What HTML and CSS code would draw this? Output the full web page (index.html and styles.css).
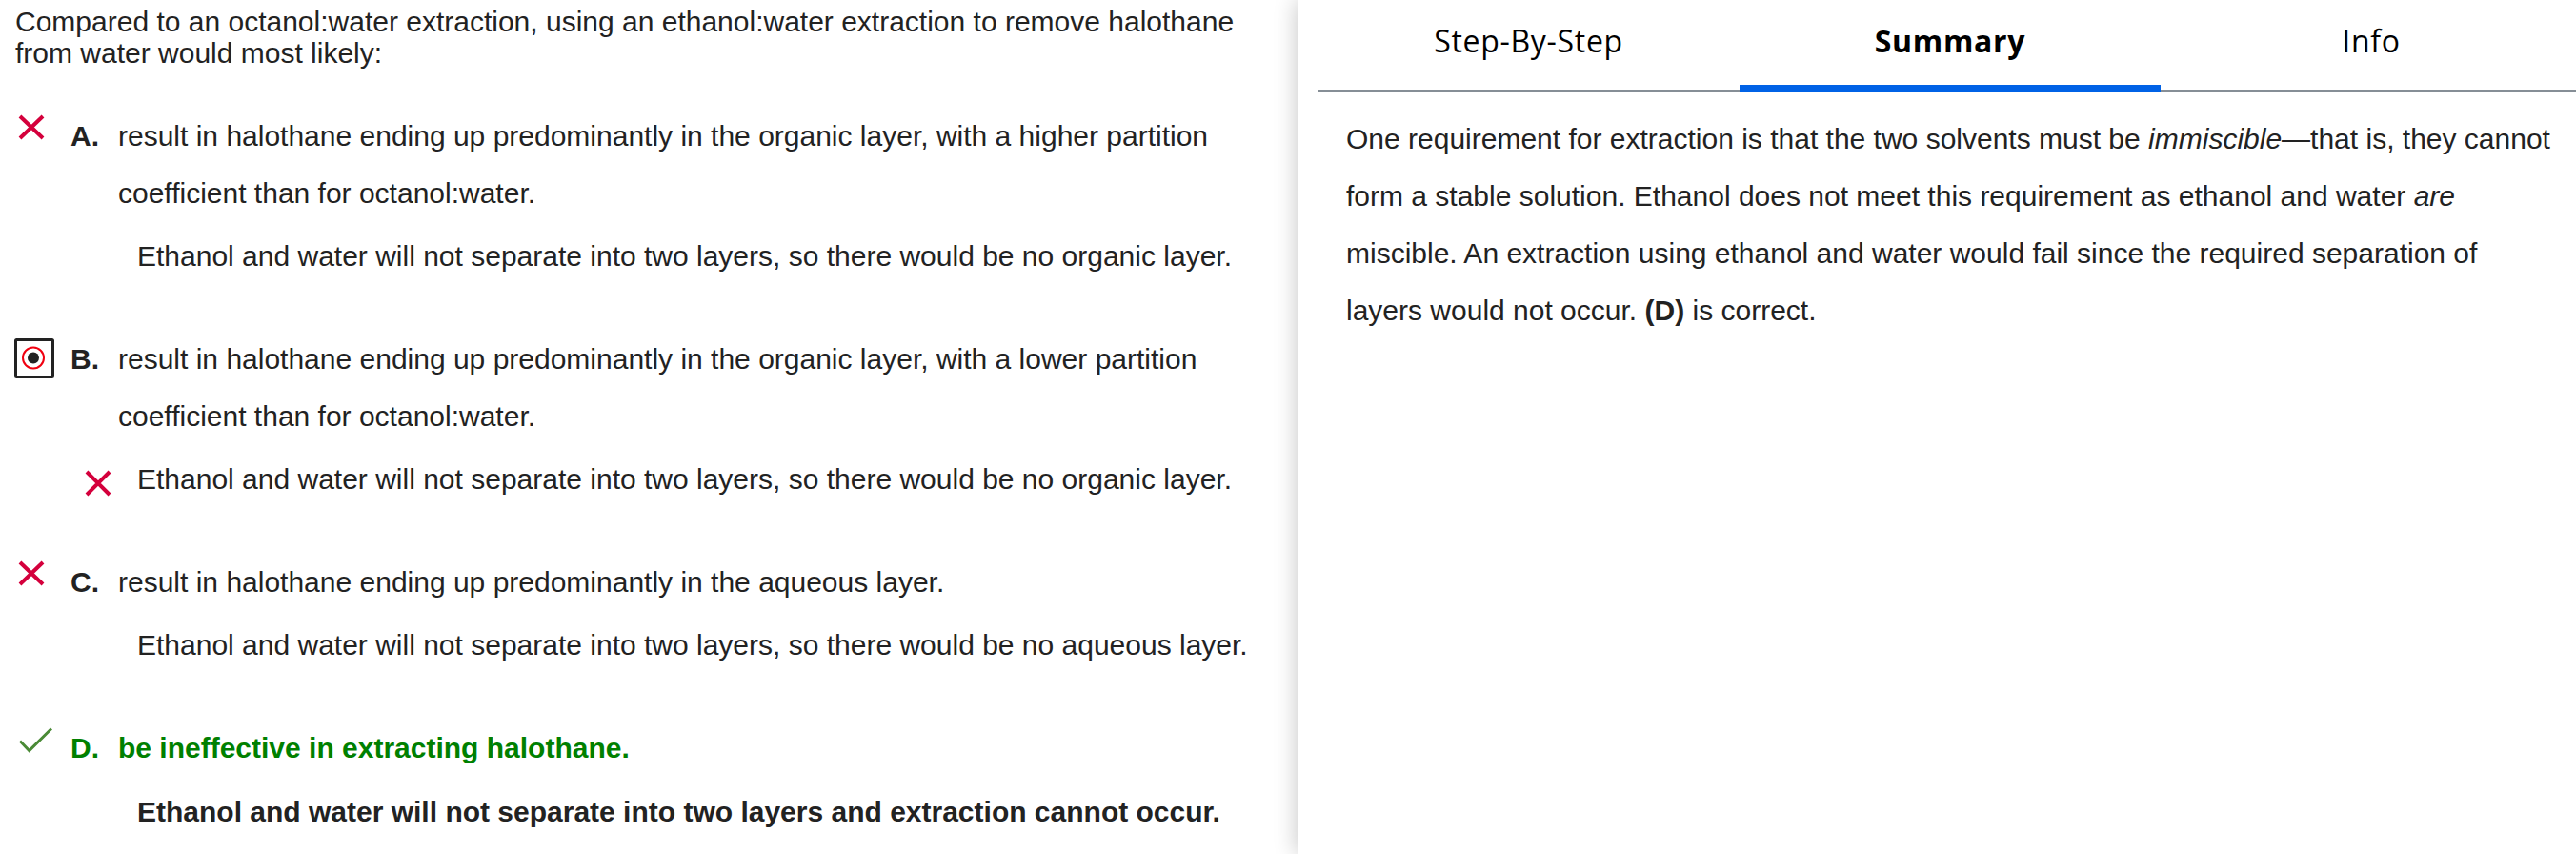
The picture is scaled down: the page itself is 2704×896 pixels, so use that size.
FILE: index.html
```html
<!DOCTYPE html>
<html lang="en">
<head>
<meta charset="utf-8">
<title>Question review</title>
<link rel="stylesheet" href="styles.css">
</head>
<body>
<div class="page">
  <main class="question-pane">
    <p class="stem">Compared to an octanol:water extraction, using an ethanol:water extraction to remove halothane from water would most likely:</p>
    <ol class="options">
      <li class="option">
        <div class="opt-row">
          <span class="mark mark-x-a"><svg width="28" height="27" viewBox="0 0 28 27"><path d="M2 2 L26 25 M26 2 L2 25" stroke="#d4003c" stroke-width="4" fill="none"/></svg></span>
          <span class="letter">A.</span>
          <span class="opt-text">result in halothane ending up predominantly in the organic layer, with a higher partition coefficient than for octanol:water.</span>
        </div>
        <div class="fb"><span class="fb-mark"></span><span class="fb-text">Ethanol and water will not separate into two layers, so there would be no organic layer.</span></div>
      </li>
      <li class="option">
        <div class="opt-row">
          <span class="mark mark-radio"><svg width="42" height="42" viewBox="0 0 42 42"><rect x="1.5" y="1.5" width="39" height="39" rx="1" fill="none" stroke="#222" stroke-width="3"/><circle cx="20" cy="20.5" r="11" fill="none" stroke="#f00010" stroke-width="2"/><circle cx="20" cy="20.5" r="6" fill="#222"/></svg></span>
          <span class="letter">B.</span>
          <span class="opt-text">result in halothane ending up predominantly in the organic layer, with a lower partition coefficient than for octanol:water.</span>
        </div>
        <div class="fb"><span class="fb-mark"><svg width="28" height="28" viewBox="0 0 28 28"><path d="M2 2 L26 26 M26 2 L2 26" stroke="#d4003c" stroke-width="4" fill="none"/></svg></span><span class="fb-text">Ethanol and water will not separate into two layers, so there would be no organic layer.</span></div>
      </li>
      <li class="option">
        <div class="opt-row">
          <span class="mark mark-x-c"><svg width="28" height="27" viewBox="0 0 28 27"><path d="M2 2 L26 25 M26 2 L2 25" stroke="#d4003c" stroke-width="4" fill="none"/></svg></span>
          <span class="letter">C.</span>
          <span class="opt-text">result in halothane ending up predominantly in the aqueous layer.</span>
        </div>
        <div class="fb"><span class="fb-mark"></span><span class="fb-text">Ethanol and water will not separate into two layers, so there would be no aqueous layer.</span></div>
      </li>
      <li class="option option-correct">
        <div class="opt-row">
          <span class="mark mark-check"><svg width="35" height="27" viewBox="0 0 35 27"><path d="M1 14.5 L10.7 24.5 L34 1.5" stroke="#4a8a36" stroke-width="3" fill="none"/></svg></span>
          <span class="letter">D.</span>
          <span class="opt-text">be ineffective in extracting halothane.</span>
        </div>
        <div class="fb fb-strong"><span class="fb-mark"></span><span class="fb-text">Ethanol and water will not separate into two layers and extraction cannot occur.</span></div>
      </li>
    </ol>
  </main>
  <aside class="summary-pane">
    <nav class="tabs">
      <div class="tab">Step-By-Step</div>
      <div class="tab tab-active">Summary</div>
      <div class="tab">Info</div>
    </nav>
    <p class="summary-text">One requirement for extraction is that the two solvents must be <em>immiscible</em>—that is, they cannot form a stable solution. Ethanol does not meet this requirement as ethanol and water <em>are</em> miscible. An extraction using ethanol and water would fail since the required separation of layers would not occur. <strong>(D)</strong> is correct.</p>
  </aside>
</div>
</body>
</html>
```

FILE: styles.css
```css
* {
  box-sizing: border-box;
  margin: 0;
  padding: 0;
}

html, body {
  width: 100%;
  height: 100%;
}

body {
  background: #ffffff;
  font-family: "Liberation Sans", Arial, sans-serif;
  color: #222222;
  overflow: hidden;
}

.page {
  display: flex;
  height: 896px;
}

/* ---------- Left: question ---------- */
.question-pane {
  flex: none;
  width: 1363px;
  padding: 6px 28px 0 16px;
  font-size: 30px;
}

.stem {
  line-height: 33px;
}

.options {
  list-style: none;
  margin-top: 41px;
}

.option {
  margin-bottom: 48px;
}

.opt-row {
  display: grid;
  grid-template-columns: 58px 50px 1fr;
  line-height: 60px;
}

.mark {
  display: block;
  align-self: start;
}

.mark svg {
  display: block;
}

.mark-x-a {
  margin: 7px 0 0 3px;
}

.mark-radio {
  margin: 8px 0 0 -1px;
}

.mark-x-c {
  margin: 7px 0 0 3px;
}

.mark-check {
  margin: 8px 0 0 4px;
}

.letter {
  font-weight: bold;
}

.option-correct .opt-row {
  color: #008000;
  font-weight: bold;
}

.fb {
  display: grid;
  grid-template-columns: 128px 1fr;
  line-height: 60px;
  margin-top: 6px;
}

.fb-mark {
  display: block;
  align-self: start;
  padding: 20px 0 0 73px;
}

.fb-mark svg {
  display: block;
}

.fb-strong {
  font-weight: bold;
  margin-top: 7px;
}

/* ---------- Right: summary ---------- */
.summary-pane {
  flex: 1;
  position: relative;
  z-index: 1;
  background: #ffffff;
  padding-left: 20px;
  box-shadow: -2px 0 22px rgba(0, 0, 0, 0.22);
}

.tabs {
  display: grid;
  grid-template-columns: 443px 442px 442px;
}

.tab {
  height: 97px;
  padding-top: 22px;
  text-align: center;
  font-family: "Open Sans", "Noto Sans", sans-serif;
  font-size: 32px;
  line-height: 42px;
  letter-spacing: 0.7px;
  color: #000000;
  border-bottom: 3px solid #868e96;
}

.tab-active {
  font-weight: bold;
  border-bottom: 8px solid #0062e6;
}

.summary-text {
  margin-top: 19px;
  padding: 0 22px 0 30px;
  font-size: 30px;
  line-height: 60px;
  color: #222222;
}

.summary-text strong {
  font-weight: bold;
}
```
